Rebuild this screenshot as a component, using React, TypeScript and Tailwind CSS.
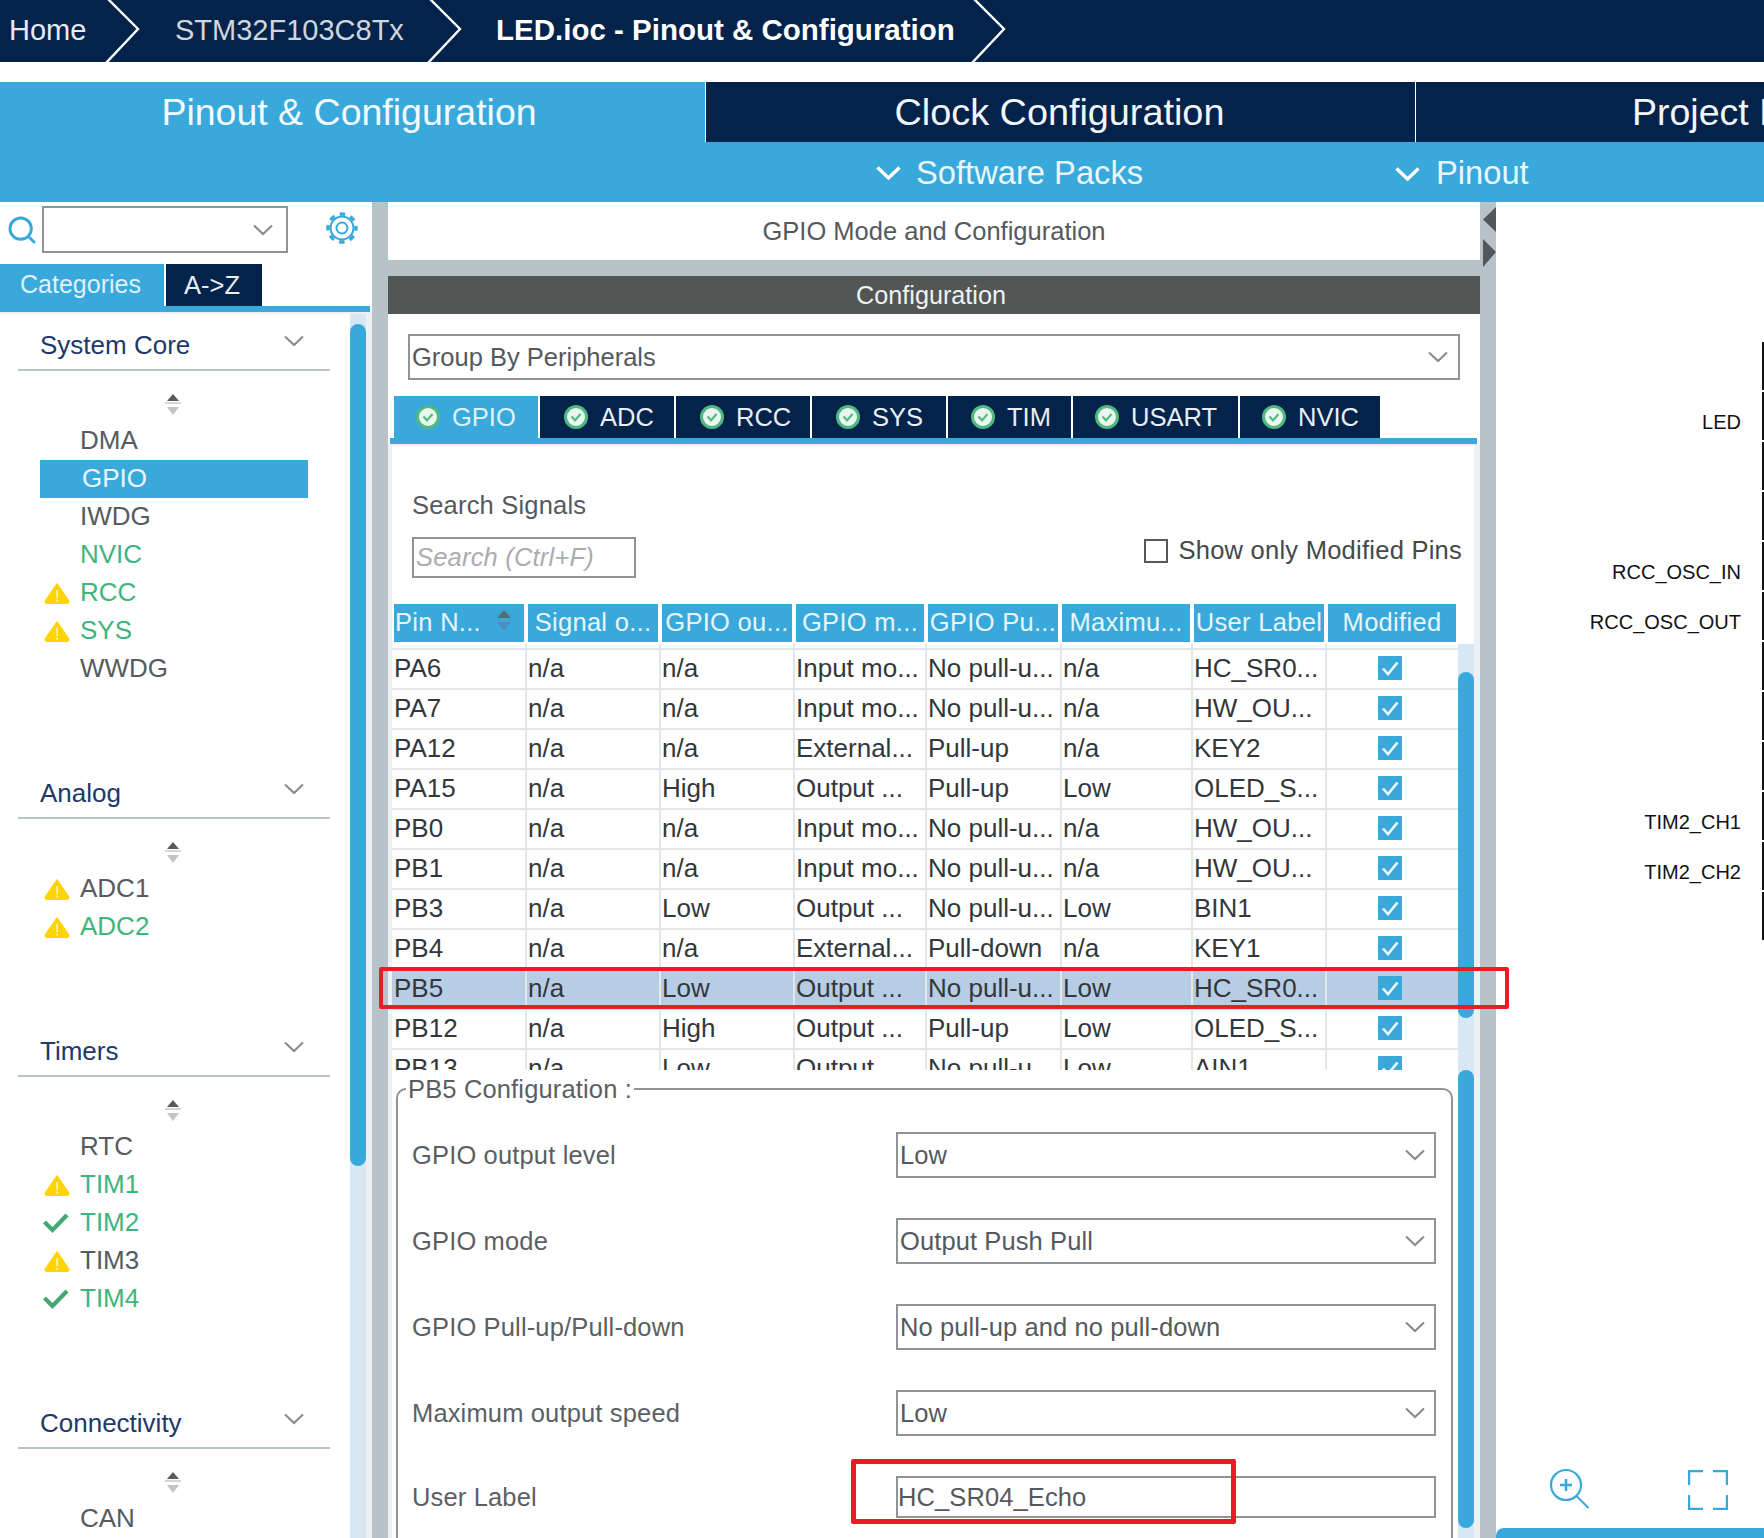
import React from "react";
import { Search } from "lucide-react";

const Chevron = ({ className = "" }: { className?: string }) => (
  <svg viewBox="0 0 20 12" className={`w-[20px] h-[12px] shrink-0 ${className}`} fill="none" stroke="#858a8e" strokeWidth="2">
    <path d="M1 1.5 L10 10 L19 1.5" />
  </svg>
);

const Crumb = () => (
  <svg viewBox="0 0 36 62" className="w-[36px] h-[62px] shrink-0" fill="none" stroke="#ffffff" strokeWidth="2.4">
    <path d="M3 -1 L33 29 L1 63" />
  </svg>
);

const Warn = () => (
  <svg viewBox="0 0 26 22" className="w-[26px] h-[22px]">
    <path d="M13 1.5 L25 19 Q25.5 21.5 23 21.5 L3 21.5 Q0.5 21.5 1 19 Z" fill="#ffd400" stroke="#ffd400" strokeLinejoin="round" />
    <rect x="12.2" y="8" width="1.8" height="8" fill="#fff3b0" />
    <rect x="12.2" y="17.5" width="1.8" height="2.2" fill="#fff3b0" />
  </svg>
);

const Tick = () => (
  <svg viewBox="0 0 26 22" className="w-[26px] h-[22px] -ml-[1px]" fill="none" stroke="#45a873" strokeWidth="4.2">
    <path d="M1.5 10 L9.5 18 L24 3" />
  </svg>
);

const Gear = () => (
  <svg viewBox="0 0 34 34" className="ml-[37px] w-[34px] h-[34px] -mt-[3px]" fill="none" stroke="#39a9dc">
    <circle cx="17" cy="17" r="11.5" strokeWidth="2" />
    <circle cx="17" cy="17" r="14" strokeWidth="3.4" strokeDasharray="5.5 5.5" strokeDashoffset="2.75" />
    <circle cx="17" cy="17" r="5.5" strokeWidth="2" />
  </svg>
);

const Sort = () => (
  <div className="w-[346px] h-[51px] flex justify-center pt-[23px]">
    <svg viewBox="0 0 16 22" className="w-[16px] h-[22px]">
      <path d="M8 0 L14 7 L2 7 Z" fill="#5a5a5a" />
      <rect x="0" y="8" width="16" height="2" fill="#d6d6d6" />
      <path d="M2 13 L14 13 L8 21 Z" fill="#c4c4c4" />
    </svg>
  </div>
);

type Item = { n: string; g?: boolean; i?: "w" | "c"; a?: boolean };

const Section = ({ title, items }: { title: string; items: Item[] }) => (
  <div className="mb-[83px]">
    <div className="ml-[18px] w-[312px] h-[48px] border-b-2 border-[#b8c2c9] flex items-center justify-between pl-[22px] pr-[26px] pb-[2px] text-[26px] text-[#21386a]">
      <span className="whitespace-nowrap">{title}</span>
      <Chevron className="-mt-[8px]" />
    </div>
    <Sort />
    {items.map((it) =>
      it.a ? (
        <div key={it.n} className="ml-[40px] w-[268px] h-[38px] bg-[#39a9dc] flex items-center pl-[42px] pb-[2px] text-[26px] text-[#eaf6fc]">
          {it.n}
        </div>
      ) : (
        <div key={it.n} className="h-[38px] flex items-center text-[26px]">
          <div className="ml-[44px] w-[36px] flex items-center">
            {it.i === "w" ? <Warn /> : it.i === "c" ? <Tick /> : null}
          </div>
          <span className={`-mt-[2px] ${it.g ? "text-[#3fb47d]" : "text-[#575b60]"}`}>{it.n}</span>
        </div>
      )
    )}
  </div>
);

const Scroll = ({ gap, h, track = "" }: { gap: number; h: number; track?: string }) => (
  <div className={`w-[16px] shrink-0 ${track}`}>
    <div style={{ marginTop: gap, height: h }} className="bg-[#39a9dc] rounded-[8px]" />
  </div>
);

const Tab = ({ w, pl, label, active }: { w: string; pl: string; label: string; active?: boolean }) => (
  <div className={`${w} ${pl} h-[42px] flex items-center shrink-0 text-[25.5px] ${active ? "bg-[#39a9dc] text-[#dff1fa]" : "bg-[#03234b] text-[#e8eef4]"}`}>
    <svg viewBox="0 0 24 24" className="w-[24px] h-[24px] mr-[12px] shrink-0" fill="none">
      <circle cx="12" cy="12" r="10.5" fill="#eaf7f0" stroke="#4fb97f" strokeWidth="3" />
      <path d="M7.5 11.5 L11 15.5 L16.5 9" stroke="#4fb97f" strokeWidth="2" />
    </svg>
    {label}
  </div>
);

const Check = () => (
  <svg viewBox="0 0 24 24" className="w-[24px] h-[24px]">
    <rect width="24" height="24" fill="#39a9dc" />
    <path d="M5 12.5 L10 18 L19.5 6.5" fill="none" stroke="#f2fafd" strokeWidth="2.6" />
  </svg>
);

const rows: string[][] = [
  ["PA6", "n/a", "n/a", "Input mo...", "No pull-u...", "n/a", "HC_SR0..."],
  ["PA7", "n/a", "n/a", "Input mo...", "No pull-u...", "n/a", "HW_OU..."],
  ["PA12", "n/a", "n/a", "External...", "Pull-up", "n/a", "KEY2"],
  ["PA15", "n/a", "High", "Output ...", "Pull-up", "Low", "OLED_S..."],
  ["PB0", "n/a", "n/a", "Input mo...", "No pull-u...", "n/a", "HW_OU..."],
  ["PB1", "n/a", "n/a", "Input mo...", "No pull-u...", "n/a", "HW_OU..."],
  ["PB3", "n/a", "Low", "Output ...", "No pull-u...", "Low", "BIN1"],
  ["PB4", "n/a", "n/a", "External...", "Pull-down", "n/a", "KEY1"],
  ["PB5", "n/a", "Low", "Output ...", "No pull-u...", "Low", "HC_SR0..."],
  ["PB12", "n/a", "High", "Output ...", "Pull-up", "Low", "OLED_S..."],
  ["PB13", "n/a", "Low", "Output ...", "No pull-u...", "Low", "AIN1"],
];

const gridCols = "grid grid-cols-[135px_134px_134px_132px_135px_131px_134px_131px]";

const headers: [string, string][] = [
  ["w-[130px]", "Pin N..."],
  ["w-[130px]", "Signal o..."],
  ["w-[130px]", "GPIO ou..."],
  ["w-[128px]", "GPIO m..."],
  ["w-[130px]", "GPIO Pu..."],
  ["w-[128px]", "Maximu..."],
  ["w-[130px]", "User Label"],
  ["w-[128px]", "Modified"],
];

const FormRow = ({ label, value, mt, input }: { label: string; value: string; mt: string; input?: boolean }) => (
  <div className={`${mt} flex items-center pl-[14px] pr-[15px] justify-between text-[25.5px]`}>
    <span className="text-[#5b5f63] tracking-[0.15px]">{label}</span>
    <div className={`w-[540px] ${input ? "h-[42px]" : "h-[46px] pl-[2px]"} border-2 border-[#8f9499] flex items-center justify-between pr-[9px] text-[#55595d]`}>
      <span className="tracking-[0.1px]">{value}</span>
      {!input && <Chevron />}
    </div>
  </div>
);

const pinLabels: [string, string][] = [
  ["LED", "top-[208px]"],
  ["RCC_OSC_IN", "top-[358px]"],
  ["RCC_OSC_OUT", "top-[408px]"],
  ["TIM2_CH1", "top-[608px]"],
  ["TIM2_CH2", "top-[658px]"],
];

export default function App() {
  return (
    <div className="relative w-[1764px] h-[1538px] overflow-hidden bg-white flex flex-col font-['Liberation_Sans',Arial,sans-serif]">
      {/* breadcrumb */}
      <div className="h-[62px] shrink-0 bg-[#03234b] flex items-center text-[#e6ebf0] text-[29px] whitespace-nowrap">
        <div className="w-[105px] pl-[9px]">Home</div>
        <Crumb />
        <div className="w-[286px] pl-[34px] text-[#cfd6de]">STM32F103C8Tx</div>
        <Crumb />
        <div className="w-[508px] pl-[33px] font-bold text-[29.5px] text-white -mt-[2px]">LED.ioc - Pinout &amp; Configuration</div>
        <Crumb />
      </div>

      {/* perspective tabs */}
      <div className="mt-[20px] h-[60px] shrink-0 flex text-[37.5px] whitespace-nowrap bg-[#39a9dc]">
        <div className="w-[705px] bg-[#39a9dc] text-[#f3fafd] flex items-center justify-center pr-[7px] pt-[1px]">Pinout &amp; Configuration</div>
        <div className="w-[1px] bg-white" />
        <div className="w-[709px] bg-[#03234b] text-[#f3f6f9] flex items-center justify-center pr-[2px] pt-[1px] text-[37.8px]">Clock Configuration</div>
        <div className="w-[1px] bg-white" />
        <div className="flex-1 bg-[#03234b] text-[#f3f6f9] flex items-center pl-[216px] pt-[1px] overflow-hidden">Project Manager</div>
      </div>
      <div className="h-[60px] shrink-0 bg-[#39a9dc] flex items-center pl-[876px] pt-[1px] text-[32.7px] text-[#e9f6fc] whitespace-nowrap">
        <div className="w-[519px] flex items-center">
          <svg viewBox="0 0 25 14" className="w-[25px] h-[14px] mr-[15px] mt-[2px]" fill="none" stroke="#fff" strokeWidth="3.4">
            <path d="M1.5 1.5 L12.5 12 L23.5 1.5" />
          </svg>
          Software Packs
        </div>
        <svg viewBox="0 0 25 14" className="w-[25px] h-[14px] mr-[16px] mt-[2px]" fill="none" stroke="#fff" strokeWidth="3.4">
          <path d="M1.5 1.5 L12.5 12 L23.5 1.5" />
        </svg>
        Pinout
      </div>

      {/* main */}
      <div className="flex-1 flex min-h-0">
        {/* sidebar */}
        <div className="w-[372px] shrink-0 flex flex-col overflow-hidden">
          <div className="mt-[4px] h-[47px] shrink-0 flex items-center pl-[6px]">
            <Search className="w-[32px] h-[32px] text-[#39a9dc] mt-[1px]" strokeWidth={2.2} />
            <div className="ml-[4px] w-[246px] h-[47px] border-2 border-[#8f9499] flex items-center justify-end pr-[13px]">
              <Chevron />
            </div>
            <Gear />
          </div>
          <div className="mt-[11px] h-[42px] shrink-0 flex text-[25px]">
            <div className="w-[164px] bg-[#39a9dc] text-[#dff1fa] flex items-center justify-center pr-[3px]">Categories</div>
            <div className="ml-[2px] w-[96px] bg-[#03234b] text-[#e8eef4] flex items-center justify-center pr-[4px] text-[25.5px]">A-&gt;Z</div>
          </div>
          <div className="h-[6px] w-[370px] shrink-0 bg-[#39a9dc]" />
          <div className="flex-1 flex min-h-0 border-t-2 border-[#eef1f3]">
            <div className="w-[350px] pt-[9px] overflow-hidden">
              <Section
                title="System Core"
                items={[
                  { n: "DMA" },
                  { n: "GPIO", a: true },
                  { n: "IWDG" },
                  { n: "NVIC", g: true },
                  { n: "RCC", g: true, i: "w" },
                  { n: "SYS", g: true, i: "w" },
                  { n: "WWDG" },
                ]}
              />
              <Section title="Analog" items={[{ n: "ADC1", i: "w" }, { n: "ADC2", g: true, i: "w" }]} />
              <Section
                title="Timers"
                items={[
                  { n: "RTC" },
                  { n: "TIM1", g: true, i: "w" },
                  { n: "TIM2", g: true, i: "c" },
                  { n: "TIM3", i: "w" },
                  { n: "TIM4", g: true, i: "c" },
                ]}
              />
              <Section title="Connectivity" items={[{ n: "CAN" }]} />
            </div>
            <Scroll gap={10} h={842} track="bg-[#d8e7f4]" />
            <div className="w-[6px] bg-[#eef1f3]" />
          </div>
        </div>

        {/* splitter */}
        <div className="w-[16px] shrink-0 bg-[#b8c2c9]" />

        {/* content */}
        <div className="w-[1092px] shrink-0 flex flex-col min-h-0 overflow-hidden">
          <div className="h-[58px] shrink-0 flex items-center justify-center text-[25.5px] text-[#55595d]">GPIO Mode and Configuration</div>
          <div className="h-[16px] shrink-0 bg-[#b8c2c9]" />
          <div className="h-[38px] shrink-0 bg-[#535655] flex items-center justify-center pr-[6px] pt-[1px] text-[25.2px] text-[#eef2f4]">Configuration</div>

          <div className="mt-[20px] ml-[20px] w-[1052px] h-[46px] shrink-0 border-2 border-[#8f9499] flex items-center justify-between pl-[2px] pr-[10px] text-[25.5px] text-[#55595d]">
            <span>Group By Peripherals</span>
            <Chevron />
          </div>

          <div className="mt-[16px] ml-[2px] w-[1087px] shrink-0 border-b-[6px] border-[#39a9dc] pl-[4px] flex gap-[2px]">
            <Tab w="w-[144px]" pl="pl-[22px]" label="GPIO" active />
            <Tab w="w-[134px]" pl="pl-[24px]" label="ADC" />
            <Tab w="w-[134px]" pl="pl-[24px]" label="RCC" />
            <Tab w="w-[134px]" pl="pl-[24px]" label="SYS" />
            <Tab w="w-[123px]" pl="pl-[23px]" label="TIM" />
            <Tab w="w-[165px]" pl="pl-[22px]" label="USART" />
            <Tab w="w-[140px]" pl="pl-[22px]" label="NVIC" />
          </div>

          {/* body */}
          <div className="flex-1 min-h-0 border-l-[4px] border-r-[6px] border-t-2 border-[#eef1f3] overflow-hidden">
            <div className="flex justify-between h-[158px]">
              <div className="pl-[20px] pt-[44px]">
                <div className="h-[30px] leading-[30px] text-[25.5px] tracking-[0.2px] text-[#55595d]">Search Signals</div>
                <div className="mt-[17px] w-[224px] h-[41px] border-2 border-[#8f9499] pl-[2px] flex items-center italic text-[25.5px] tracking-[0.2px] text-[#a9adb1] whitespace-nowrap">Search (Ctrl+F)</div>
              </div>
              <div className="pt-[91px] flex items-start pr-[12px] h-fit">
                <div className="mt-[2px] w-[24px] h-[24px] border-2 border-[#55595d] mr-[10px]" />
                <span className="leading-[26px] text-[25.5px] tracking-[0.25px] text-[#44484c]">Show only Modified Pins</span>
              </div>
            </div>

            {/* table header */}
            <div className="flex gap-[4px] pl-[2px] h-[38px] text-[25.5px] tracking-[0.3px] text-[#e8f5fb] whitespace-nowrap">
              {headers.map(([w, t], i) => (
                <div key={t} className={`${w} relative bg-[#39a9dc] flex items-center pb-[1px] ${i === 0 ? "pl-[1px]" : "justify-center"}`}>
                  {t}
                  {i === 0 && (
                    <svg viewBox="0 0 16 22" className="absolute left-[102px] top-[6px] w-[16px] h-[22px]">
                      <path d="M8 0 L15 8 L1 8 Z" fill="#5a6a78" />
                      <path d="M1 12 L15 12 L8 21 Z" fill="#4a8fbd" />
                    </svg>
                  )}
                </div>
              ))}
            </div>

            {/* table body */}
            <div className="mt-[2px] h-[426px] flex">
              <div className="w-[1066px] overflow-hidden text-[26px] text-[#33373b] whitespace-nowrap">
                <div className={`${gridCols} h-[4px]`}>
                  {[0, 1, 2, 3, 4, 5, 6].map((k) => (
                    <div key={k} className="border-r-2 border-[#e3e7ea]" />
                  ))}
                </div>
                {rows.map((r) => (
                  <div key={r[0]} className={`${gridCols} h-[40px] border-t-2 border-[#e3e7ea] ${r[0] === "PB5" ? "bg-[#b7cde4]" : ""}`}>
                    {r.map((c, i) => (
                      <div key={i} className={`${i === 0 ? "pl-[2px]" : "pl-[1px]"} pb-[2px] border-r-2 border-[#e3e7ea] flex items-center overflow-hidden`}>
                        {c}
                      </div>
                    ))}
                    <div className="flex items-center pl-[51px] pb-[2px]">
                      <Check />
                    </div>
                  </div>
                ))}
              </div>
              <Scroll gap={28} h={346} track="bg-[#d8e7f4]" />
            </div>

            {/* config */}
            <div className="flex h-[468px]">
              <div className="w-[1066px] pl-[4px] pr-[5px] pt-[4px]">
                <fieldset className="h-[475px] border-2 border-[#8f9499] rounded-[10px]">
                  <legend className="ml-[8px] px-[2px] h-[30px] leading-[30px] text-[25.5px] tracking-[0.15px] text-[#5b5f63]">PB5 Configuration :</legend>
                  <FormRow label="GPIO output level" value="Low" mt="mt-[28px]" />
                  <FormRow label="GPIO mode" value="Output Push Pull" mt="mt-[40px]" />
                  <FormRow label="GPIO Pull-up/Pull-down" value="No pull-up and no pull-down" mt="mt-[40px]" />
                  <FormRow label="Maximum output speed" value="Low" mt="mt-[40px]" />
                  <FormRow label="User Label" value="HC_SR04_Echo" mt="mt-[40px]" input />
                </fieldset>
              </div>
              <Scroll gap={0} h={458} track="bg-[#d8e7f4]" />
            </div>
          </div>
        </div>

        {/* splitter with collapse arrows */}
        <div className="relative w-[16px] shrink-0 bg-[#b8c2c9]">
          <svg viewBox="0 0 14 62" className="absolute left-[2px] top-[5px] w-[14px] h-[62px]">
            <path d="M14 0 L14 25 L1 12.5 Z" fill="#53575b" />
            <path d="M1 32 L14 45 L1 60 Z" fill="#53575b" />
          </svg>
        </div>

        {/* pinout canvas */}
        <div className="relative flex-1 flex flex-col justify-end overflow-hidden">
          <div className="absolute right-0 top-[140px] w-[2px] flex flex-col gap-[2px]">
            {Array.from({ length: 12 }).map((_, i) => (
              <div key={i} className="h-[48px] bg-[#111]" />
            ))}
          </div>
          {pinLabels.map(([t, top]) => (
            <div key={t} className={`absolute right-[23px] ${top} text-[20px] leading-[24px] text-[#111] whitespace-nowrap`}>
              {t}
            </div>
          ))}
          <svg viewBox="0 0 42 42" className="absolute left-[53px] top-[1266px] w-[42px] h-[42px]" fill="none" stroke="#39a9dc" strokeWidth="2">
            <circle cx="17" cy="17" r="15" strokeWidth="2.2" />
            <path d="M27.5 28 L39.5 40" />
            <path d="M17 11 V23 M11 17 H23" strokeWidth="2.6" />
          </svg>
          <svg viewBox="0 0 40 40" className="absolute left-[192px] top-[1268px] w-[40px] h-[40px]" fill="none" stroke="#39a9dc" strokeWidth="2.4">
            <path d="M1 15 V1 H15 M25 1 H39 V15 M1 25 V39 H15 M25 39 H39 V25" />
          </svg>
          <div className="h-[10px] bg-[#39a9dc] rounded-tl-[8px]" />
        </div>
      </div>

      {/* red annotation rectangles */}
      <div className="absolute left-[379px] top-[967px] w-[1130px] h-[42px] border-4 border-[#ed1c24] rounded-[2px]" />
      <div className="absolute left-[851px] top-[1459px] w-[385px] h-[65px] border-[5px] border-[#ed1c24] rounded-[2px]" />
    </div>
  );
}
